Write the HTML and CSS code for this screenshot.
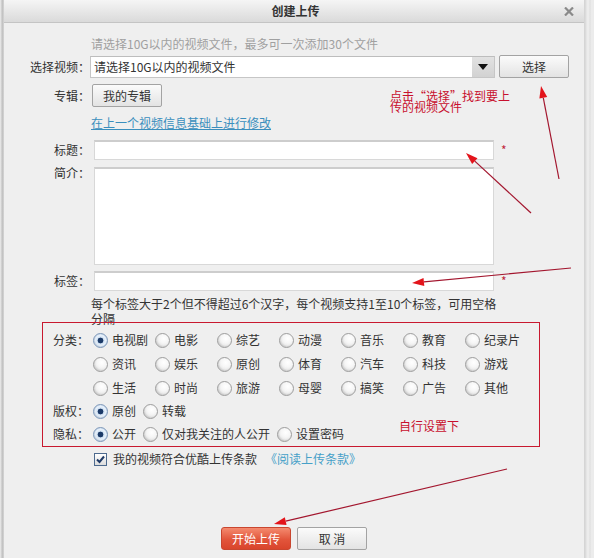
FILE: index.html
```html
<!DOCTYPE html>
<html lang="zh-CN">
<head>
<meta charset="utf-8">
<title>创建上传</title>
<link rel="stylesheet" href="styles.css">
</head>
<body>
<div class="screen">
  <div class="edge-left"></div>
  <div class="dialog">
    <div class="titlebar">
      <span class="title">创建上传</span>
      <span class="close"><svg width="10" height="9" viewBox="0 0 10 9"><path d="M1 0.5 L9 8.5 M9 0.5 L1 8.5" stroke="#8a8a8a" stroke-width="2.2"/></svg></span>
    </div>
    <div class="body">
      <div class="hint">请选择10G以内的视频文件，最多可一次添加30个文件</div>
      <div class="row row-file">
        <span class="lbl">选择视频：</span>
        <div class="select">
          <span class="select-text">请选择10G以内的视频文件</span>
          <span class="select-arrow"><i class="tri"></i></span>
        </div>
        <button class="btn btn-pick">选择</button>
      </div>
      <div class="row row-album">
        <span class="lbl">专辑：</span>
        <button class="btn btn-album">我的专辑</button>
      </div>
      <a class="link-edit" href="#">在上一个视频信息基础上进行修改</a>
      <div class="row row-title">
        <span class="lbl">标题：</span>
        <div class="input"></div>
        <span class="star">*</span>
      </div>
      <div class="row row-desc">
        <span class="lbl">简介：</span>
        <div class="input textarea"></div>
      </div>
      <div class="row row-tags">
        <span class="lbl">标签：</span>
        <div class="input"></div>
        <span class="star">*</span>
      </div>
      <div class="help">每个标签大于2个但不得超过6个汉字，每个视频支持1至10个标签，可用空格分隔</div>
      <div class="fieldset">
        <div class="fs-row">
          <span class="fs-lbl">分类：</span>
          <div class="cat-grid">
            <span class="opt"><i class="radio on"></i>电视剧</span>
            <span class="opt"><i class="radio"></i>电影</span>
            <span class="opt"><i class="radio"></i>综艺</span>
            <span class="opt"><i class="radio"></i>动漫</span>
            <span class="opt"><i class="radio"></i>音乐</span>
            <span class="opt"><i class="radio"></i>教育</span>
            <span class="opt"><i class="radio"></i>纪录片</span>
            <span class="opt"><i class="radio"></i>资讯</span>
            <span class="opt"><i class="radio"></i>娱乐</span>
            <span class="opt"><i class="radio"></i>原创</span>
            <span class="opt"><i class="radio"></i>体育</span>
            <span class="opt"><i class="radio"></i>汽车</span>
            <span class="opt"><i class="radio"></i>科技</span>
            <span class="opt"><i class="radio"></i>游戏</span>
            <span class="opt"><i class="radio"></i>生活</span>
            <span class="opt"><i class="radio"></i>时尚</span>
            <span class="opt"><i class="radio"></i>旅游</span>
            <span class="opt"><i class="radio"></i>母婴</span>
            <span class="opt"><i class="radio"></i>搞笑</span>
            <span class="opt"><i class="radio"></i>广告</span>
            <span class="opt"><i class="radio"></i>其他</span>
          </div>
        </div>
        <div class="fs-row fs-row-copy">
          <span class="fs-lbl">版权：</span>
          <div class="inline-opts">
            <span class="opt opt-inline"><i class="radio on"></i>原创</span>
            <span class="opt opt-inline"><i class="radio"></i>转载</span>
          </div>
        </div>
        <div class="fs-row fs-row-priv">
          <span class="fs-lbl">隐私：</span>
          <div class="inline-opts">
            <span class="opt opt-inline"><i class="radio on"></i>公开</span>
            <span class="opt opt-inline"><i class="radio"></i>仅对我关注的人公开</span>
            <span class="opt opt-inline"><i class="radio"></i>设置密码</span>
          </div>
        </div>
      </div>
      <div class="agree">
        <span class="checkbox"><svg width="11" height="11" viewBox="0 0 11 11"><path d="M2 5.5 L4.5 8 L9 2.5" fill="none" stroke="#1f3a66" stroke-width="2"/></svg></span>
        <span class="agree-text">我的视频符合优酷上传条款</span>
        <a class="link-terms" href="#">《阅读上传条款》</a>
      </div>
      <div class="actions">
        <button class="btn btn-primary">开始上传</button>
        <button class="btn btn-cancel">取 消</button>
      </div>
    </div>
  </div>
  <div class="edge-right"></div>

  <svg class="notes" width="594" height="558" viewBox="0 0 594 558">
    <g stroke="#a3162e" stroke-width="1.2" fill="none">
      <line x1="559" y1="179" x2="543.3" y2="97.8"/>
      <line x1="531" y1="213" x2="474.8" y2="161.1"/>
      <line x1="571" y1="268" x2="423.9" y2="281.9"/>
      <line x1="507" y1="469" x2="285.7" y2="521.2"/>
    </g>
    <g fill="#e3141b">
      <polygon points="541,86 547.2,97 539.4,98.5"/>
      <polygon points="466,153 477.5,158.2 472.1,164.1"/>
      <polygon points="412,283 423.5,277.9 424.3,285.9"/>
      <polygon points="274,524 284.8,517.3 286.6,525.1"/>
    </g>
  </svg>
  <div class="note note-pick">点击“选择”找到要上传的视频文件</div>
  <div class="note note-self">自行设置下</div>
</div>
</body>
</html>
```

FILE: styles.css
```css
* { box-sizing: border-box; margin: 0; padding: 0; }
html, body { width: 594px; height: 558px; overflow: hidden; }
body {
  margin: 0;
  font-family: "Noto Sans CJK SC", "Liberation Sans", sans-serif;
  font-size: 12px;
  color: #333;
  background: #ececec;
}
.screen { position: relative; width: 594px; height: 558px; display: flex; }

.edge-left {
  width: 4px;
  background: linear-gradient(to right, #e4e4e4 0, #e4e4e4 1px, #bdbdbd 2px, #c9c9c9 3px, #d6d6d6 4px);
}
.dialog {
  width: 580px;
  background: #efefef;
  display: flex;
  flex-direction: column;
}
.edge-right {
  flex: 1;
  background: linear-gradient(to right, #d2d2d2 0, #dedede 2px, #ececec 3px, #ececec 5px, #dddddd 6px, #ececec 7px);
}

/* title bar */
.titlebar {
  height: 23px;
  display: grid;
  grid-template-columns: 1fr auto 1fr;
  align-items: center;
  background: linear-gradient(#f5f5f5, #dadada);
  border-bottom: 1px solid #c4c4c4;
}
.title {
  grid-column: 2;
  font-weight: bold;
  color: #333;
  line-height: 22px;
  padding-left: 3px;
}
.close {
  grid-column: 3;
  justify-self: end;
  margin-right: 10px;
  display: flex;
}

/* form */
.body { display: flex; flex-direction: column; }
.hint {
  margin: 13px 0 0 87px;
  line-height: 16px;
  color: #a0a0a0;
}
.row { display: flex; align-items: center; }
.lbl {
  width: 86px;
  text-align: right;
  color: #333;
  line-height: 16px;
}
.row-file { margin-top: 3px; height: 23px; align-items: flex-end; }
.row-file .lbl { align-self: center; padding-top: 1px; }
.select {
  width: 405px;
  height: 22px;
  display: flex;
  background: #fff;
  border: 1px solid #c6c6c6;
  border-top-color: #bdbdbd;
}
.select-text {
  flex: 1;
  line-height: 20px;
  padding-left: 3px;
  color: #333;
}
.select-arrow {
  width: 22px;
  background: linear-gradient(#e2e2e2, #d2d2d2);
  display: flex;
  align-items: center;
  justify-content: center;
}
.tri {
  width: 0; height: 0;
  border-left: 5px solid transparent;
  border-right: 5px solid transparent;
  border-top: 6px solid #111;
}

.btn {
  font-family: inherit;
  font-size: 12px;
  color: #333;
  border: 1px solid #a3a3a3;
  border-radius: 2px;
  background: linear-gradient(#fbfbfb, #e3e3e3);
  display: flex;
  align-items: center;
  justify-content: center;
}
.btn-pick { width: 70px; height: 23px; margin-left: 4px; }
.row-album { margin-top: 6px; height: 23px; }
.btn-album { width: 70px; height: 23px; margin-left: 2px; }

.link-edit {
  margin: 8px 0 0 87px;
  line-height: 16px;
  color: #3a8ebd;
  text-decoration: underline;
  align-self: flex-start;
}

.input {
  width: 400px;
  height: 20px;
  margin-left: 4px;
  background: #fff;
  border: 1px solid #d8d8d8;
  border-top: 2px solid #cdcdcd;
}
.textarea { height: 98px; }
.star { margin-left: 7px; color: #c0283c; line-height: 16px; }
.row-title { margin-top: 9px; }
.row-desc { margin-top: 7px; align-items: flex-start; }
.row-desc .lbl { line-height: 12px; }
.row-tags { margin-top: 6px; }

.help {
  margin: 5px 0 0 87px;
  width: 410px;
  line-height: 15px;
  color: #333;
}

/* red annotation box with radio groups */
.fieldset {
  position: relative;
  margin: -4px 0 0 38px;
  width: 498px;
  height: 125px;
  border: 1px solid #c8192f;
  padding-top: 5px;
}
.fs-row { display: flex; align-items: flex-start; }
.fs-lbl {
  width: 46px;
  text-align: right;
  line-height: 24px;
  color: #333;
}
.cat-grid {
  margin-left: 4px;
  display: grid;
  grid-template-columns: repeat(7, 62px);
  grid-auto-rows: 24px;
  align-items: center;
}
.opt { display: flex; align-items: center; line-height: 16px; color: #333; white-space: nowrap; }
.radio {
  display: inline-block;
  width: 15px;
  height: 15px;
  margin-right: 4px;
  border-radius: 50%;
  border: 1px solid #9d9d9d;
  background: radial-gradient(circle at 60% 35%, #ffffff 0, #f6f6f6 40%, #d4d4d4 100%);
  box-shadow: inset 1px -1px 1px rgba(0,0,0,0.08);
}
.radio.on {
  border-color: #7d97b8;
  background: radial-gradient(circle, #1b3a68 0, #1b3a68 2.6px, #cfe0f2 3.2px, #e8f1fb 5px, #a9c3e0 100%);
}
.fs-row-copy { height: 22px; }
.fs-row-copy .fs-lbl { line-height: 22px; }
.fs-row-priv { height: 24px; }
.inline-opts { margin-left: 4px; display: flex; align-items: center; height: 100%; }
.opt-inline { margin-right: 7px; }

.agree {
  margin: 4px 0 0 90px;
  height: 16px;
  display: flex;
  align-items: center;
}
.checkbox {
  width: 13px;
  height: 13px;
  border: 1px solid #4d6a8e;
  background: linear-gradient(#ffffff, #dcdcdc);
  display: flex;
  align-items: center;
  justify-content: center;
  margin-right: 6px;
}
.agree-text { line-height: 16px; color: #333; }
.link-terms { margin-left: 8px; color: #46a0c8; text-decoration: none; line-height: 16px; }

.actions {
  margin-top: 60px;
  display: flex;
  justify-content: center;
  gap: 6px;
}
.btn-primary {
  width: 70px;
  height: 23px;
  color: #fff;
  border: 1px solid #c9462f;
  border-radius: 3px;
  background: linear-gradient(#f48a6f, #e2553b 55%, #d9452c);
}
.btn-cancel { width: 70px; height: 23px; }

/* annotations drawn over the dialog */
.notes { position: absolute; left: 0; top: 0; pointer-events: none; }
.note { position: absolute; color: #c8102e; font-size: 12px; }
.note-pick { left: 390px; top: 90px; width: 121px; line-height: 11px; font-feature-settings: "fwid" 1; }
.note-self { left: 399px; top: 418px; line-height: 16px; }
```
